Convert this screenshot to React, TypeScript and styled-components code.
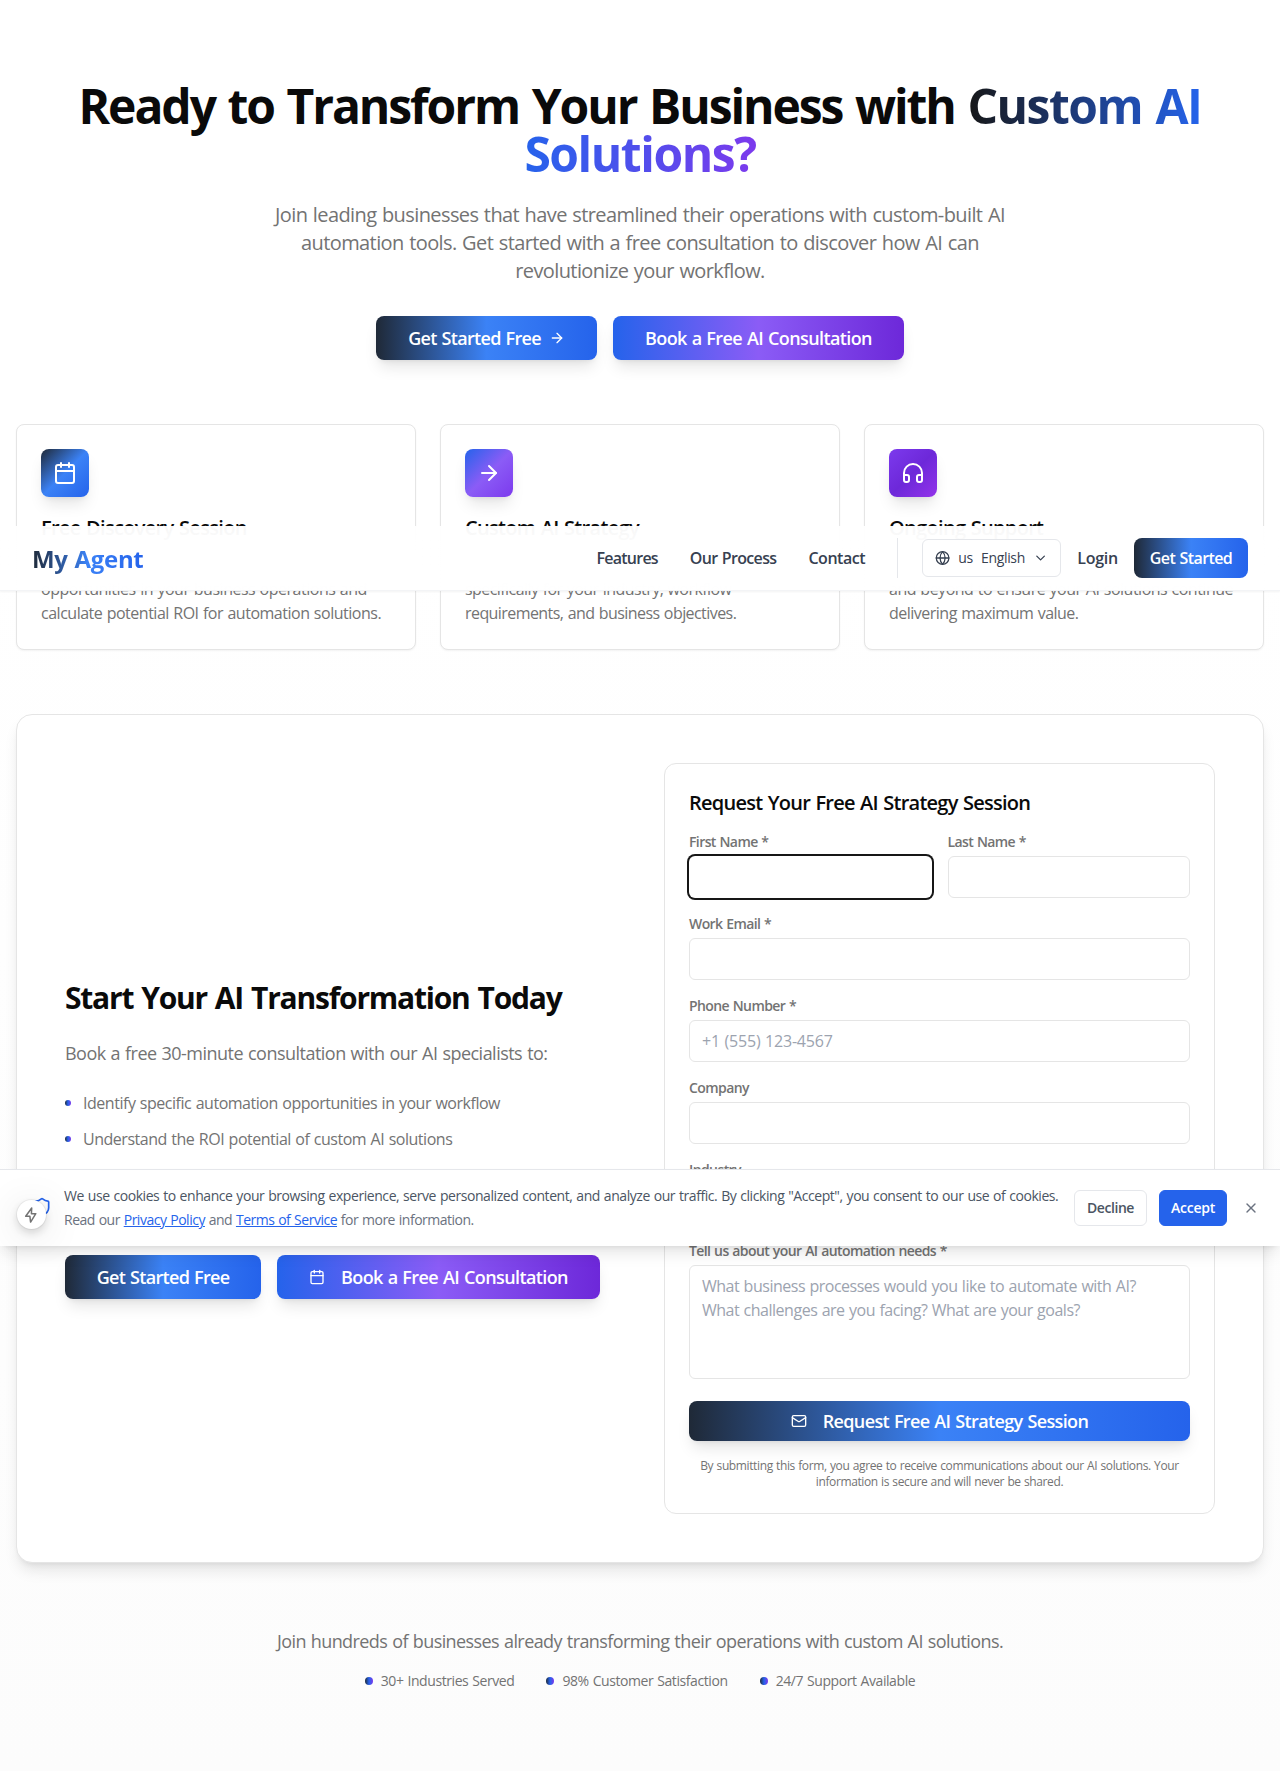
import React from "react";
import styled, { createGlobalStyle, css } from "styled-components";
import {
  ArrowRight,
  Calendar,
  ChevronDown,
  Globe,
  Headphones,
  Mail,
  Shield,
  X,
} from "lucide-react";

const GlobalStyle = createGlobalStyle`
  *, *::before, *::after { box-sizing: border-box; }
  body {
    margin: 0;
    background: #fff;
    color: #0a0a0a;
    font-family: "Open Sans", "Noto Sans", sans-serif;
  }
  h1, h2, h3, p, ul { margin: 0; padding: 0; }
  button, input, select, textarea { font-family: inherit; margin: 0; }
`;

const gradients = {
  blue: "#1f2937, #3b82f6, #2563eb",
  violet: "#2563eb, #8b5cf6, #6d28d9",
  indigo: "#2563eb, #8b5cf6, #7c3aed",
  purple: "#7c3aed, #6d28d9, #9333ea",
};
type Tone = keyof typeof gradients;

const type = (size: number, line: number, weight = 400, spacing?: number) => css`
  font-size: ${size}px;
  line-height: ${line}px;
  font-weight: ${weight};
  letter-spacing: ${(spacing ?? (weight === 400 ? -0.0235 : weight === 600 ? -0.0305 : -0.0335)) - 0.007}em;
  word-spacing: ${size * 0.045}px;
`;

const shadowLg = "0 10px 15px -3px rgba(0,0,0,.1), 0 4px 6px -4px rgba(0,0,0,.1)";

const Page = styled.div`
  position: relative;
  width: 1280px;
  height: 1771px;
  overflow: hidden;
`;

const Section = styled.section`
  height: 1771px;
  padding: 82px 16px 0;
  background: linear-gradient(180deg, #fff 0%, #fff 30%, #fcfcfc 100%);
`;

const Hero = styled.header`
  display: flex;
  flex-direction: column;
  align-items: center;
  text-align: center;
`;

const HeroTitle = styled.h1`
  ${type(48, 48, 700, -0.036)}
  white-space: nowrap;
`;

const HeroAccent = styled.span`
  background: linear-gradient(90deg, #171717, #2563eb, #7c3aed);
  -webkit-background-clip: text;
  background-clip: text;
  color: transparent;
  letter-spacing: -0.0305em;
`;

const HeroText = styled.p`
  ${type(20, 28, 400, -0.023)}
  margin-top: 23px;
  color: #737373;
`;

const ButtonRow = styled.div<{ $top: number }>`
  display: flex;
  gap: 16px;
  margin-top: ${(p) => p.$top}px;
`;

const GradientButton = styled.button<{ $tone: Tone; $w?: number; $h?: number; $gap?: number; $ls?: number }>`
  ${(p) => type(18, 28, 600, p.$ls)}
  display: flex;
  align-items: center;
  justify-content: center;
  gap: ${(p) => p.$gap ?? 8}px;
  width: ${(p) => (p.$w ? `${p.$w}px` : "100%")};
  height: ${(p) => p.$h ?? 44}px;
  padding: 0;
  border: 0;
  border-radius: 8px;
  color: #fff;
  white-space: nowrap;
  background: linear-gradient(90deg, ${(p) => gradients[p.$tone]});
  box-shadow: ${shadowLg};
`;

const Cards = styled.div`
  display: grid;
  grid-template-columns: repeat(3, 1fr);
  gap: 24px;
  margin-top: 64px;
`;

const Card = styled.article`
  display: flex;
  flex-direction: column;
  height: 226px;
  padding: 24px;
  border: 1px solid #e5e5e5;
  border-radius: 8px;
  background: #fff;
  box-shadow: 0 1px 2px rgba(0, 0, 0, 0.05);
`;

const CardIcon = styled.div<{ $tone: Tone }>`
  display: flex;
  align-items: center;
  justify-content: center;
  width: 48px;
  height: 48px;
  margin-bottom: 17px;
  border-radius: 8px;
  color: #fff;
  background: linear-gradient(135deg, ${(p) => gradients[p.$tone]});
  box-shadow: ${shadowLg};
`;

const CardTitle = styled.h3`
  ${type(20, 28, 600, -0.027)}
  margin-bottom: auto;
`;

const CardText = styled.p<{ $ls?: number }>`
  ${(p) => type(16, 24, 400, p.$ls)}
  color: #737373;
  white-space: nowrap;
`;

const Panel = styled.div`
  display: grid;
  grid-template-columns: 1fr 1fr;
  gap: 48px;
  align-items: center;
  height: 849px;
  margin-top: 64px;
  padding: 48px;
  border: 1px solid #e5e5e5;
  border-radius: 16px;
  background: #fff;
  box-shadow: ${shadowLg};
`;

const PanelTitle = styled.h2`
  ${type(30, 36, 700)}
  padding-top: 1px;
`;

const PanelLead = styled.p`
  ${type(18, 28, 400, -0.022)}
  margin: 23px 0 24px;
  color: #737373;
`;

const Bullets = styled.ul`
  display: flex;
  flex-direction: column;
  gap: 12px;
  height: 132px;
  list-style: none;
`;

const Bullet = styled.li`
  ${type(16, 24, 400, -0.0225)}
  display: flex;
  align-items: center;
  gap: 12px;
  color: #737373;
`;

const Dot = styled.span<{ $size: number }>`
  width: ${(p) => p.$size}px;
  height: ${(p) => p.$size}px;
  border-radius: 50%;
  background: linear-gradient(90deg, #1f2937, #2563eb, #7c3aed);
`;

const FormCard = styled.form`
  height: 751px;
  padding: 24px;
  border: 1px solid #e5e5e5;
  border-radius: 12px;
  background: #fff;
`;

const FormTitle = styled.h3`
  ${type(20, 28, 600)}
  padding-top: 1px;
  margin-bottom: 15px;
`;

const Fields = styled.div`
  display: flex;
  flex-direction: column;
  gap: 16px;
`;

const NameRow = styled.div`
  display: grid;
  grid-template-columns: 1fr 1fr;
  gap: 16px;
`;

const FieldBox = styled.label`
  ${type(14, 20, 600, -0.035)}
  display: flex;
  flex-direction: column;
  gap: 4px;
  color: #737373;
`;

const control = css`
  ${type(16, 24, 400, -0.0235)}
  display: block;
  width: 100%;
  border: 1px solid #e5e5e5;
  border-radius: 6px;
  background: #fff;
  color: #0a0a0a;
  outline: none;
  &::placeholder {
    color: #9ca3af;
    opacity: 1;
  }
`;

const Input = styled.input<{ $focused?: boolean }>`
  ${control}
  height: 42px;
  padding: 8px 12px;
  letter-spacing: -0.013em;
  ${(p) => p.$focused && "border-color: transparent; box-shadow: 0 0 0 2px #171717;"}
`;

const Select = styled.select`
  ${control}
  height: 41px;
  padding: 8px 12px;
`;

const TextArea = styled.textarea`
  ${control}
  height: 114px;
  margin-bottom: 6px;
  padding: 8px 12px;
  resize: none;
`;

const FinePrint = styled.p`
  ${type(12, 16, 400, -0.0245)}
  padding-top: 1px;
  color: #737373;
  text-align: center;
`;

const Closing = styled.footer`
  display: flex;
  flex-direction: column;
  align-items: center;
  gap: 16px;
  margin-top: 64px;
  color: #737373;
`;

const ClosingText = styled.p`
  ${type(18, 28, 400, -0.0255)}
`;

const Stats = styled.div`
  ${type(14, 20, 400, -0.0225)}
  display: flex;
  gap: 32px;
`;

const Stat = styled.span`
  display: flex;
  align-items: center;
  gap: 8px;
`;

const NavBar = styled.nav`
  position: absolute;
  top: 526px;
  left: 0;
  display: flex;
  align-items: center;
  justify-content: space-between;
  width: 1280px;
  height: 65px;
  padding: 0 32px;
  border-bottom: 1px solid #f3f4f6;
  background: linear-gradient(180deg, rgba(255, 255, 255, 0.965) 0, rgba(255, 255, 255, 0.99) 20px, rgba(255, 255, 255, 0.995) 100%);
  background-clip: padding-box;
  box-shadow: 0 1px 2px rgba(0, 0, 0, 0.05);
  color: #374151;
`;

const Logo = styled.span`
  ${type(24, 32, 700, -0.007)}
  padding-top: 2px;
  background: linear-gradient(90deg, ${gradients.blue});
  -webkit-background-clip: text;
  background-clip: text;
  color: transparent;
`;

const NavRight = styled.div`
  display: flex;
  align-items: center;
`;

const NavLink = styled.a<{ $mr: number; $ls: number }>`
  ${(p) => type(16, 24, 600, p.$ls)}
  margin-right: ${(p) => p.$mr}px;
`;

const Divider = styled.span`
  width: 1px;
  height: 40px;
  margin-right: 24px;
  background: #e5e7eb;
`;

const Language = styled.button`
  ${type(14, 20, 400, -0.016)}
  display: flex;
  align-items: center;
  gap: 8px;
  width: 139px;
  height: 38px;
  margin-right: 16px;
  padding: 0 12px;
  border: 1px solid #e5e7eb;
  border-radius: 6px;
  background: #fff;
  color: #374151;
`;

const NavButton = styled.button`
  ${type(16, 24, 600, -0.029)}
  width: 114px;
  height: 40px;
  padding: 0;
  border: 0;
  border-radius: 8px;
  color: #fff;
  background: linear-gradient(90deg, ${gradients.blue});
`;

const CookieBar = styled.aside`
  position: absolute;
  top: 1169px;
  left: 0;
  display: flex;
  align-items: center;
  width: 1280px;
  height: 77px;
  padding: 0 17px 0 32px;
  border-top: 1px solid #e5e7eb;
  background: #fff;
  box-shadow: ${shadowLg};
`;

const CookieText = styled.div`
  ${type(14, 24, 400, -0.0239)}
  flex: 1;
  margin-left: 12px;
  color: #4b5563;
  white-space: nowrap;
`;

const CookieNote = styled.p`
  color: #6b7280;
  letter-spacing: -0.035em;
`;

const CookieLink = styled.a`
  color: #2563eb;
  text-decoration: underline;
`;

const CookieButton = styled.button<{ $primary?: boolean; $w: number }>`
  ${(p) => type(14, 20, 600, p.$primary ? -0.012 : -0.024)}
  width: ${(p) => p.$w}px;
  height: 36px;
  margin-right: 12px;
  padding: 0;
  border: 1px solid ${(p) => (p.$primary ? "#2563eb" : "#e5e7eb")};
  border-radius: 6px;
  background: ${(p) => (p.$primary ? "#2563eb" : "#fff")};
  color: ${(p) => (p.$primary ? "#fff" : "#4b5563")};
`;

const CloseButton = styled.button`
  display: flex;
  width: 24px;
  height: 24px;
  align-items: center;
  justify-content: center;
  padding: 0;
  border: 0;
  background: none;
  color: #6b7280;
`;

const ShieldSlot = styled.span`
  display: flex;
  align-self: flex-start;
  margin-top: 27px;
  color: #2563eb;
`;

const QuickButton = styled.button`
  position: absolute;
  top: 1200px;
  left: 17px;
  display: flex;
  align-items: center;
  justify-content: center;
  width: 29px;
  height: 29px;
  padding: 0 1px 0 0;
  border: 0;
  border-radius: 50%;
  background: #fff;
  color: #737373;
  box-shadow: 0 0 0 1px rgba(0, 0, 0, 0.05), 0 4px 8px rgba(0, 0, 0, 0.14), 0 6px 40px rgba(0, 0, 0, 0.14);
`;

const BoltIcon = () => (
  <svg width="16" height="16" viewBox="0 0 16 16" fill="none" stroke="currentColor" strokeWidth="1.5" strokeLinejoin="round">
    <path d="M8.7 1 2.7 9.3h4.2l.7 5.8 5.2-8.4H8.4z" />
  </svg>
);

const cards = [
  {
    tone: "blue" as Tone,
    Icon: Calendar,
    title: "Free Discovery Session",
    lines: ["opportunities in your business operations and", "calculate potential ROI for automation solutions."],
  },
  {
    tone: "indigo" as Tone,
    Icon: ArrowRight,
    title: "Custom AI Strategy",
    lines: ["specifically for your industry, workflow", "requirements, and business objectives."],
    ls: -0.0285,
  },
  {
    tone: "purple" as Tone,
    Icon: Headphones,
    title: "Ongoing Support",
    lines: ["and beyond to ensure your AI solutions continue", "delivering maximum value."],
    ls: -0.0245,
  },
];

const bullets = [
  "Identify specific automation opportunities in your workflow",
  "Understand the ROI potential of custom AI solutions",
];

const stats = ["30+ Industries Served", "98% Customer Satisfaction", "24/7 Support Available"];

export default function App() {
  return (
    <Page>
      <GlobalStyle />
      <Section>
        <Hero>
          <HeroTitle>
            Ready to Transform Your Business with{" "}
            <HeroAccent>
              Custom AI
              <br />
              Solutions?
            </HeroAccent>
          </HeroTitle>
          <HeroText>
            Join leading businesses that have streamlined their operations with custom-built AI
            <br />
            automation tools. Get started with a free consultation to discover how AI can
            <br />
            revolutionize your workflow.
          </HeroText>
          <ButtonRow $top={31}>
            <GradientButton $tone="blue" $w={221}>
              Get Started Free <ArrowRight size={16} />
            </GradientButton>
            <GradientButton $tone="violet" $w={291} $ls={-0.0265}>
              Book a Free AI Consultation
            </GradientButton>
          </ButtonRow>
        </Hero>

        <Cards>
          {cards.map(({ tone, Icon, title, lines, ls }) => (
            <Card key={title}>
              <CardIcon $tone={tone}>
                <Icon size={24} />
              </CardIcon>
              <CardTitle>{title}</CardTitle>
              {lines.map((line) => (
                <CardText key={line} $ls={ls}>
                  {line}
                </CardText>
              ))}
            </Card>
          ))}
        </Cards>

        <Panel>
          <div>
            <PanelTitle>Start Your AI Transformation Today</PanelTitle>
            <PanelLead>Book a free 30-minute consultation with our AI specialists to:</PanelLead>
            <Bullets>
              {bullets.map((text) => (
                <Bullet key={text}>
                  <Dot $size={6} />
                  {text}
                </Bullet>
              ))}
            </Bullets>
            <ButtonRow $top={32}>
              <GradientButton $tone="blue" $w={196}>
                Get Started Free
              </GradientButton>
              <GradientButton $tone="violet" $w={323} $gap={16} $ls={-0.0265}>
                <Calendar size={16} /> Book a Free AI Consultation
              </GradientButton>
            </ButtonRow>
          </div>

          <FormCard>
            <FormTitle>Request Your Free AI Strategy Session</FormTitle>
            <Fields>
              <NameRow>
                <FieldBox>
                  First Name *
                  <Input $focused />
                </FieldBox>
                <FieldBox>
                  Last Name *
                  <Input />
                </FieldBox>
              </NameRow>
              <FieldBox>
                Work Email *
                <Input />
              </FieldBox>
              <FieldBox>
                Phone Number *
                <Input placeholder="+1 (555) 123-4567" />
              </FieldBox>
              <FieldBox>
                Company
                <Input />
              </FieldBox>
              <FieldBox>
                Industry
                <Select />
              </FieldBox>
              <FieldBox>
                Tell us about your AI automation needs *
                <TextArea
                  placeholder={
                    "What business processes would you like to automate with AI?\nWhat challenges are you facing? What are your goals?"
                  }
                />
              </FieldBox>
              <GradientButton type="button" $tone="blue" $h={40} $gap={16} $ls={-0.028}>
                <Mail size={16} /> Request Free AI Strategy Session
              </GradientButton>
              <FinePrint>
                By submitting this form, you agree to receive communications about our AI solutions. Your
                <br />
                information is secure and will never be shared.
              </FinePrint>
            </Fields>
          </FormCard>
        </Panel>

        <Closing>
          <ClosingText>
            Join hundreds of businesses already transforming their operations with custom AI solutions.
          </ClosingText>
          <Stats>
            {stats.map((text) => (
              <Stat key={text}>
                <Dot $size={8} />
                {text}
              </Stat>
            ))}
          </Stats>
        </Closing>
      </Section>

      <NavBar>
        <Logo>My Agent</Logo>
        <NavRight>
          <NavLink $mr={32} $ls={-0.041}>Features</NavLink>
          <NavLink $mr={32} $ls={-0.034}>Our Process</NavLink>
          <NavLink $mr={32} $ls={-0.022}>Contact</NavLink>
          <Divider />
          <Language>
            <Globe size={16} />
            <span>us</span>
            <span>English</span>
            <ChevronDown size={16} />
          </Language>
          <NavLink $mr={16} $ls={-0.007}>Login</NavLink>
          <NavButton>Get Started</NavButton>
        </NavRight>
      </NavBar>

      <CookieBar>
        <ShieldSlot>
          <Shield size={20} />
        </ShieldSlot>
        <CookieText>
          <p>
            We use cookies to enhance your browsing experience, serve personalized content, and analyze our traffic. By
            clicking "Accept", you consent to our use of cookies.
          </p>
          <CookieNote>
            Read our <CookieLink>Privacy Policy</CookieLink> and <CookieLink>Terms of Service</CookieLink> for more
            information.
          </CookieNote>
        </CookieText>
        <CookieButton $w={73}>Decline</CookieButton>
        <CookieButton $w={68} $primary>
          Accept
        </CookieButton>
        <CloseButton>
          <X size={16} />
        </CloseButton>
      </CookieBar>

      <QuickButton>
        <BoltIcon />
      </QuickButton>
    </Page>
  );
}
